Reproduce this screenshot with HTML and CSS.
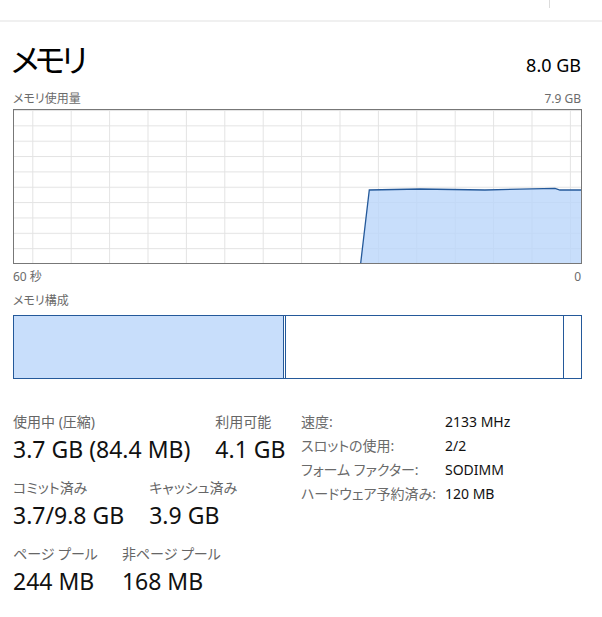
FILE: index.html
```html
<!DOCTYPE html>
<html lang="ja">
<head>
<meta charset="utf-8">
<link rel="stylesheet" href="styles.css">
</head>
<body>
<div class="topbar"><div class="tick"></div></div>
<div class="rule"></div>
<main class="page">
  <div class="header">
    <h1 class="title">メモリ</h1>
    <div class="total">8.0 GB</div>
  </div>
  <div class="caption-row">
    <span>メモリ使用量</span>
    <span>7.9 GB</span>
  </div>
  <div class="chart">
    <svg width="567" height="153" viewBox="0 0 567 153">
      <defs>
        <pattern id="grid" x="18.3" y="0" width="38.4" height="15.35" patternUnits="userSpaceOnUse">
          <rect x="0" y="0" width="1" height="15.35" fill="#e3e3e3"/>
          <rect x="0" y="0" width="38.4" height="1" fill="#e3e3e3"/>
        </pattern>
      </defs>
      <rect x="0" y="0" width="567" height="153" fill="url(#grid)"/>
      <polygon points="346.7,153 355.3,80 406,79 471,80 541,78.3 546,80 567,80 567,153" fill="#bad6fa" fill-opacity="0.8"/>
      <polyline points="346.7,153 355.3,80 406,79 471,80 541,78.3 546,80 567,80" fill="none" stroke="#24599a" stroke-width="1.3"/>
    </svg>
  </div>
  <div class="caption-row axis">
    <span>60 秒</span>
    <span>0</span>
  </div>
  <div class="caption-row comp-label">
    <span>メモリ構成</span>
  </div>
  <div class="bar">
    <div class="seg inuse"></div>
    <div class="seg modified"></div>
    <div class="seg standby"></div>
    <div class="seg free"></div>
  </div>
  <div class="stats">
    <div class="stats-left">
      <div class="stat-row">
        <div class="stat"><div class="label">使用中 (圧縮)</div><div class="value">3.7 GB (84.4 MB)</div></div>
        <div class="stat"><div class="label">利用可能</div><div class="value">4.1 GB</div></div>
      </div>
      <div class="stat-row">
        <div class="stat"><div class="label">コミット済み</div><div class="value">3.7/9.8 GB</div></div>
        <div class="stat"><div class="label">キャッシュ済み</div><div class="value">3.9 GB</div></div>
      </div>
      <div class="stat-row">
        <div class="stat"><div class="label">ページ プール</div><div class="value">244 MB</div></div>
        <div class="stat"><div class="label">非ページ プール</div><div class="value">168 MB</div></div>
      </div>
    </div>
    <dl class="props">
      <dt>速度:</dt><dd>2133 MHz</dd>
      <dt>スロットの使用:</dt><dd>2/2</dd>
      <dt>フォーム ファクター:</dt><dd>SODIMM</dd>
      <dt>ハードウェア予約済み:</dt><dd>120 MB</dd>
    </dl>
  </div>
</main>
</body>
</html>
```
FILE: styles.css
```css
html, body {
  margin: 0;
  padding: 0;
  background: #ffffff;
}
body {
  font-family: "Noto Sans", "Noto Sans CJK JP", sans-serif;
  font-feature-settings: "palt";
  color: #000;
  width: 602px;
  height: 617px;
  overflow: hidden;
}
.topbar {
  height: 20px;
  display: flex;
  justify-content: flex-end;
}
.tick {
  width: 1px;
  height: 8px;
  background: #dcdcdc;
  margin-right: 52px;
}
.rule {
  height: 2px;
  background: #f0f0f0;
}
.page {
  padding-left: 13px;
  width: 569px;
}
.header {
  display: flex;
  justify-content: space-between;
  align-items: baseline;
  margin-top: 15px;
  height: 53px;
}
.title {
  margin: 0;
  font-weight: 400;
  font-size: 32px;
  line-height: 46px;
  margin-left: -2px;
  letter-spacing: -4px;
}
.total {
  font-size: 18px;
  padding-right: 1px;
}
.caption-row {
  display: flex;
  justify-content: space-between;
  font-size: 12px;
  line-height: 17px;
  color: #6b6b6b;
  padding-right: 1px;
}
.chart {
  margin-top: 2px;
  border: 1px solid #777777;
  width: 567px;
  height: 153px;
}
.chart svg {
  display: block;
}
.axis {
  margin-top: 4px;
}
.comp-label {
  margin-top: 7px;
}
.bar {
  margin-top: 6px;
  display: flex;
  border: 1px solid #24599a;
  height: 62px;
  width: 567px;
}
.seg {
  border-right: 1px solid #24599a;
}
.inuse {
  width: 269px;
  background: #c8defb;
}
.modified {
  width: 1px;
}
.standby {
  width: 277px;
}
.free {
  flex: 1;
  border-right: none;
}
.stats {
  display: flex;
  margin-top: 33px;
}
.stats-left {
  width: 288px;
}
.stat-row {
  display: flex;
  gap: 25px;
  margin-bottom: 13px;
}
.stat-row:nth-child(3) {
  gap: 24px;
}
.label {
  font-size: 14px;
  line-height: 19px;
  color: #666666;
  margin-bottom: 3px;
}
.value {
  font-size: 23px;
  line-height: 31px;
  color: #111111;
}
.props {
  margin: 0;
  display: grid;
  grid-template-columns: 144px auto;
  grid-auto-rows: 24px;
  font-size: 14px;
  line-height: 19px;
}
.props dt {
  color: #6a6a6a;
}
.props dd {
  margin: 0;
  color: #111111;
}
```
